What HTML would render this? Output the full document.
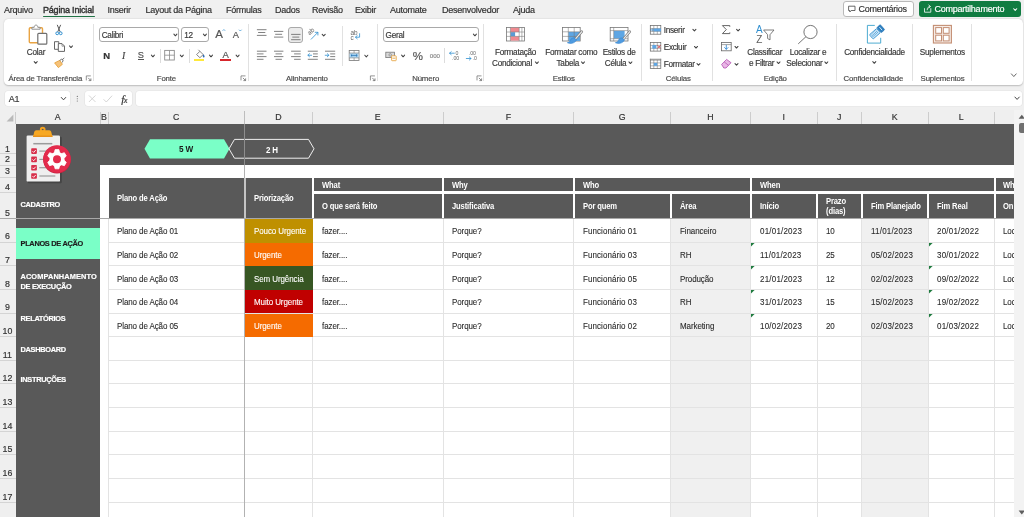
<!DOCTYPE html>
<html>
<head>
<meta charset="utf-8">
<title>Excel</title>
<style>
*{box-sizing:border-box;margin:0;padding:0}
html,body{width:1024px;height:517px;overflow:hidden}
body{background:#f0f0f0;font-family:"Liberation Sans",sans-serif;position:relative;color:#333}
.abs{position:absolute}
.t{-webkit-text-stroke:0.18px currentColor;position:absolute;white-space:nowrap;line-height:1;transform:translateY(calc(-50% + 0.8px))}
.c{transform:translate(-50%,calc(-50% + 0.8px))}
.tab{font-size:9px;color:#303030;letter-spacing:-0.24px}
.rl{font-size:8.2px;color:#3a3a3a;letter-spacing:-0.26px}
.gl{font-size:7.8px;color:#4a4a4a;letter-spacing:-0.14px}
.ch{font-size:8.8px;color:#333}
.th{font-size:8.2px;font-weight:bold;color:#fff;letter-spacing:-0.15px;-webkit-text-stroke:0;transform:translateY(calc(-50% + 0.8px)) scaleX(0.93);transform-origin:0 50%}
.c.th{transform:translate(-50%,calc(-50% + 0.8px)) scaleX(0.93);transform-origin:50% 50%}
.td{font-size:8.5px;color:#2b2b2b;letter-spacing:-0.1px;-webkit-text-stroke:0.1px currentColor;transform:translateY(calc(-50% + 0.8px)) scaleX(0.94);transform-origin:0 50%}
.nav{font-size:7.4px;font-weight:bold;color:#fff;letter-spacing:-0.3px}
.dt{letter-spacing:0.22px}
svg{position:absolute;overflow:visible}
#app{position:absolute;left:0;top:0;width:1024px;height:517px;overflow:hidden;will-change:transform;transform:translateZ(0)}

</style>
</head>
<body>
<div id="app">
<div class="t tab" style="left:4.00px;top:9.70px;">Arquivo</div>
<div class="t tab" style="left:43.00px;top:9.70px;-webkit-text-stroke:0.38px currentColor;letter-spacing:-0.2px">Página Inicial</div>
<div class="t tab" style="left:107.50px;top:9.70px;">Inserir</div>
<div class="t tab" style="left:145.50px;top:9.70px;">Layout da Página</div>
<div class="t tab" style="left:226.00px;top:9.70px;">Fórmulas</div>
<div class="t tab" style="left:275.00px;top:9.70px;">Dados</div>
<div class="t tab" style="left:312.00px;top:9.70px;">Revisão</div>
<div class="t tab" style="left:355.00px;top:9.70px;">Exibir</div>
<div class="t tab" style="left:390.00px;top:9.70px;">Automate</div>
<div class="t tab" style="left:442.00px;top:9.70px;">Desenvolvedor</div>
<div class="t tab" style="left:513.00px;top:9.70px;">Ajuda</div>
<div class="abs" style="left:43.00px;top:15.60px;width:52.00px;height:1.50px;background:#217346;border-radius:1px"></div>
<div class="abs" style="left:843.00px;top:1.20px;width:70.50px;height:15.60px;background:#fff;border:0.8px solid #b9b9b9;border-radius:3px"></div>
<div class="abs" style="left:919.00px;top:1.20px;width:102.00px;height:15.60px;background:#107c41;border-radius:3px"></div>
<div class="t tab" style="left:858.50px;top:9.40px;color:#333">Comentários</div>
<div class="t tab" style="left:934.50px;top:9.40px;color:#fff">Compartilhamento</div>
<div class="abs" style="left:4.20px;top:19.20px;width:1018.60px;height:65.40px;background:#fff;border-radius:4.5px;box-shadow:0 0.6px 1.6px rgba(0,0,0,.22)"></div>
<div class="abs" style="left:93.20px;top:24.00px;width:0.80px;height:56.50px;background:#e1e1e1"></div>
<div class="abs" style="left:247.90px;top:24.00px;width:0.80px;height:56.50px;background:#e1e1e1"></div>
<div class="abs" style="left:377.10px;top:24.00px;width:0.80px;height:56.50px;background:#e1e1e1"></div>
<div class="abs" style="left:483.20px;top:24.00px;width:0.80px;height:56.50px;background:#e1e1e1"></div>
<div class="abs" style="left:640.90px;top:24.00px;width:0.80px;height:56.50px;background:#e1e1e1"></div>
<div class="abs" style="left:712.10px;top:24.00px;width:0.80px;height:56.50px;background:#e1e1e1"></div>
<div class="abs" style="left:835.60px;top:24.00px;width:0.80px;height:56.50px;background:#e1e1e1"></div>
<div class="abs" style="left:911.60px;top:24.00px;width:0.80px;height:56.50px;background:#e1e1e1"></div>
<div class="abs" style="left:970.90px;top:24.00px;width:0.80px;height:56.50px;background:#e1e1e1"></div>
<div class="t c rl" style="left:36.00px;top:52.20px;">Colar</div>
<div class="t gl" style="left:8.40px;top:78.20px;">Área de Transferência</div>
<div class="abs" style="left:99.00px;top:27.10px;width:80.20px;height:15.40px;background:#fff;border:0.8px solid #a9a9a9;border-radius:3px"></div>
<div class="t rl" style="left:101.70px;top:34.60px;">Calibri</div>
<div class="abs" style="left:181.40px;top:27.10px;width:27.30px;height:15.40px;background:#fff;border:0.8px solid #a9a9a9;border-radius:3px"></div>
<div class="t rl" style="left:184.20px;top:34.60px;">12</div>
<div class="t c" style="left:219.00px;top:34.20px;font-size:11.5px;color:#555">A</div>
<div class="t c" style="left:235.80px;top:35.00px;font-size:9.3px;color:#555">A</div>
<div class="t c" style="left:106.70px;top:55.40px;font-size:9.5px;font-weight:bold;color:#333">N</div>
<div class="t c" style="left:123.70px;top:55.40px;font-size:9.8px;font-style:italic;font-family:'Liberation Serif',serif;color:#444">I</div>
<div class="t c" style="left:140.90px;top:55.00px;font-size:9.2px;color:#555">S</div>
<div class="abs" style="left:138.20px;top:59.40px;width:5.40px;height:0.70px;background:#555"></div>
<div class="abs" style="left:160.00px;top:48.50px;width:0.80px;height:14.00px;background:#dcdcdc"></div>
<div class="abs" style="left:189.00px;top:48.50px;width:0.80px;height:14.00px;background:#dcdcdc"></div>
<div class="abs" style="left:193.60px;top:58.80px;width:10.60px;height:2.40px;background:#ffe93b"></div>
<div class="t c" style="left:225.60px;top:54.00px;font-size:9.500px;color:#555">A</div>
<div class="abs" style="left:220.40px;top:58.80px;width:10.40px;height:2.40px;background:#d7262c"></div>
<div class="t gl" style="left:156.80px;top:78.20px;">Fonte</div>
<div class="abs" style="left:288.20px;top:26.90px;width:15.20px;height:15.70px;background:#ebebeb;border:0.8px solid #a9a9a9;border-radius:3px"></div>
<div class="abs" style="left:342.00px;top:26.20px;width:0.80px;height:40.30px;background:#e1e1e1"></div>
<div class="t gl" style="left:286.00px;top:78.20px;">Alinhamento</div>
<div class="abs" style="left:383.20px;top:27.10px;width:95.50px;height:15.40px;background:#fff;border:0.8px solid #a9a9a9;border-radius:3px"></div>
<div class="t rl" style="left:385.60px;top:34.60px;">Geral</div>
<div class="t c" style="left:417.90px;top:56.00px;font-size:11.500px;color:#555">%</div>
<div class="t c" style="left:434.90px;top:54.70px;font-size:6.200px;color:#8a8a8a">000</div>
<div class="abs" style="left:444.10px;top:47.80px;width:0.80px;height:15.60px;background:#dcdcdc"></div>
<div class="t gl" style="left:412.20px;top:78.20px;">Número</div>
<div class="t c rl" style="left:515.60px;top:52.10px;">Formatação</div>
<div class="t c rl" style="left:512.00px;top:62.50px;">Condicional</div>
<div class="t c rl" style="left:571.30px;top:52.10px;">Formatar como</div>
<div class="t c rl" style="left:567.80px;top:62.50px;">Tabela</div>
<div class="t c rl" style="left:619.10px;top:52.10px;">Estilos de</div>
<div class="t c rl" style="left:615.60px;top:62.50px;">Célula</div>
<div class="t gl" style="left:552.70px;top:78.20px;">Estilos</div>
<div class="t rl" style="left:663.70px;top:30.10px;">Inserir</div>
<div class="t rl" style="left:663.70px;top:47.30px;">Excluir</div>
<div class="t rl" style="left:663.70px;top:64.30px;">Formatar</div>
<div class="t gl" style="left:665.70px;top:78.20px;">Células</div>
<div class="t c rl" style="left:764.70px;top:52.10px;">Classificar</div>
<div class="t c rl" style="left:761.60px;top:62.50px;">e Filtrar</div>
<div class="t c rl" style="left:808.00px;top:52.10px;">Localizar e</div>
<div class="t c rl" style="left:804.40px;top:62.50px;">Selecionar</div>
<div class="t gl" style="left:763.80px;top:78.20px;">Edição</div>
<div class="t c rl" style="left:874.50px;top:52.10px;">Confidencialidade</div>
<div class="t gl" style="left:843.60px;top:78.20px;">Confidencialidade</div>
<div class="t c rl" style="left:942.30px;top:52.10px;">Suplementos</div>
<div class="t gl" style="left:920.60px;top:78.20px;">Suplementos</div>
<div class="abs" style="left:4.90px;top:90.80px;width:65.00px;height:15.20px;background:#fff;border-radius:3px;box-shadow:0 0 0 0.6px #e3e3e3"></div>
<div class="t rl" style="left:8.80px;top:98.90px;font-size:9px;color:#3a3a3a">A1</div>
<div class="abs" style="left:84.60px;top:90.80px;width:47.60px;height:15.20px;background:#fff;border-radius:3px;box-shadow:0 0 0 0.6px #e3e3e3"></div>
<div class="t c" style="left:124.30px;top:98.50px;font-family:'Liberation Serif',serif;font-size:11px;color:#333"><i>f</i><span style="font-size:8.300px;margin-left:-0.6px"><i>x</i></span></div>
<div class="abs" style="left:135.70px;top:90.80px;width:886.70px;height:15.20px;background:#fff;border-radius:3px;box-shadow:0 0 0 0.6px #e3e3e3"></div>
<svg style="left:0;top:0" width="1024" height="110" viewBox="0 0 1024 110"><path d="M848.6 6.2h6.4v4.3h-3.8l-1.4 1.5v-1.5h-1.2z" fill="none" stroke="#444" stroke-width="0.8" stroke-linejoin="round"/><path d="M924.5 8.6v3.6h6.3v-3.6M927.2 9.8c0-2 .9-3.2 2.9-3.3M928.8 4.9l1.5 1.6-1.5 1.6" fill="none" stroke="#fff" stroke-width="0.8" stroke-linecap="round" stroke-linejoin="round"/><path d="M1013.70 8.75L1015.20 10.37L1016.70 8.75" fill="none" stroke="#fff" stroke-width="1.05" stroke-linecap="round" stroke-linejoin="round"/><rect x="29.3" y="27.8" width="13.2" height="15" rx="1" fill="#fff" stroke="#e9a443" stroke-width="1.4"/><path d="M31.9 29.200v-1.900h2.300c0-1.400.7-2.200 1.800-2.200s1.800.8 1.800 2.200h2.300v1.900z" fill="#fff" stroke="#858585" stroke-width="0.9" stroke-linejoin="round"/><rect x="37.8" y="33.4" width="9" height="10.8" rx="0.9" fill="#fff" stroke="#6f6f6f" stroke-width="1.2"/><path d="M34.20 61.65L35.70 63.27L37.20 61.65" fill="none" stroke="#444" stroke-width="1.05" stroke-linecap="round" stroke-linejoin="round"/><path d="M57.4 25.2l2.600 6.300M60.500 25.200l-2.600 6.300" fill="none" stroke="#5a5a5a" stroke-width="1" stroke-linecap="round"/><circle cx="57.2" cy="33.3" r="1.4" fill="none" stroke="#2f8fd0" stroke-width="1"/><circle cx="60.700" cy="33.300" r="1.4" fill="none" stroke="#2f8fd0" stroke-width="1"/><path d="M54.500 41.700h4.300v7.600h-4.300z" fill="#fff" stroke="#5e5e5e" stroke-width="0.95"/><path d="M58.300 43.600h3.700l2.500 2.500v5.300h-6.200z" fill="#fff" stroke="#5e5e5e" stroke-width="0.95" stroke-linejoin="round"/><path d="M62 43.700v2.500h2.400" fill="none" stroke="#666" stroke-width="0.6"/><path d="M69.50 45.95L71.00 47.56L72.50 45.95" fill="none" stroke="#444" stroke-width="1.05" stroke-linecap="round" stroke-linejoin="round"/><path d="M54.600 62.900l5.100-2.500 2.700 3.900-4 3.300z" fill="#f6c27a" stroke="#e39a2d" stroke-width="0.8" stroke-linejoin="round"/><path d="M60 60.600l1.300-1.600 1.900 1.400-.9 1.800M62.300 59.600l1.700-1.400" fill="none" stroke="#666" stroke-width="0.9" stroke-linecap="round"/><path d="M86.3 80.4V75.9H90.8" fill="none" stroke="#666" stroke-width="0.7"/><path d="M88.19999999999999 77.9L90.8 80.5M90.89999999999999 78.4V80.60000000000001H88.69999999999999" fill="none" stroke="#666" stroke-width="0.75"/><path d="M173.90 34.15L175.40 35.77L176.90 34.15" fill="none" stroke="#444" stroke-width="1.05" stroke-linecap="round" stroke-linejoin="round"/><path d="M203.40 34.15L204.90 35.77L206.40 34.15" fill="none" stroke="#444" stroke-width="1.05" stroke-linecap="round" stroke-linejoin="round"/><path d="M222.600 30.800l1.300-1.300 1.300 1.300" fill="none" stroke="#2f8fd0" stroke-width="0.7"/><path d="M239 29.700l1.300 1.300 1.300-1.300" fill="none" stroke="#2f8fd0" stroke-width="0.7"/><path d="M151.40 55.15L152.90 56.77L154.40 55.15" fill="none" stroke="#444" stroke-width="1.05" stroke-linecap="round" stroke-linejoin="round"/><rect x="164.700" y="50.400" width="9.600" height="9.600" fill="none" stroke="#8c8c8c" stroke-width="0.9"/><path d="M169.500 50.400v9.600M164.700 55.200h9.600" stroke="#8c8c8c" stroke-width="0.8"/><path d="M180.30 55.15L181.80 56.77L183.30 55.15" fill="none" stroke="#444" stroke-width="1.05" stroke-linecap="round" stroke-linejoin="round"/><path d="M196.600 54.600l3.300-3.300 3.300 3.300-3.300 3.100z" fill="#fff" stroke="#666" stroke-width="0.8" stroke-linejoin="round"/><path d="M199.900 51.300l-1.500-1.500" stroke="#666" stroke-width="0.8"/><path d="M203.400 54.300c.9 1 1.200 1.700 1.200 2.300a.9.900 0 0 1-1.800 0c0-.6.200-1.300.6-2.300z" fill="#2f6fb5"/><path d="M209.50 55.15L211.00 56.77L212.50 55.15" fill="none" stroke="#444" stroke-width="1.05" stroke-linecap="round" stroke-linejoin="round"/><path d="M236.10 55.15L237.60 56.77L239.10 55.15" fill="none" stroke="#444" stroke-width="1.05" stroke-linecap="round" stroke-linejoin="round"/><path d="M241.0 80.4V75.9H245.5" fill="none" stroke="#666" stroke-width="0.7"/><path d="M242.9 77.9L245.5 80.5M245.60000000000002 78.4V80.60000000000001H243.4" fill="none" stroke="#666" stroke-width="0.75"/><path d="M256.90 29.70H266.50" stroke="#6c6c6c" stroke-width="0.85"/><path d="M258.10 32.50H265.30" stroke="#6c6c6c" stroke-width="0.85"/><path d="M256.90 35.40H266.50" stroke="#6c6c6c" stroke-width="0.85"/><path d="M274.00 31.40H283.30" stroke="#6c6c6c" stroke-width="0.85"/><path d="M275.20 34.30H282.10" stroke="#6c6c6c" stroke-width="0.85"/><path d="M274.00 37.10H283.30" stroke="#6c6c6c" stroke-width="0.85"/><path d="M291.10 34.40H300.50" stroke="#6c6c6c" stroke-width="0.85"/><path d="M292.30 37.10H299.30" stroke="#6c6c6c" stroke-width="0.85"/><path d="M291.10 39.70H300.50" stroke="#6c6c6c" stroke-width="0.85"/><text x="0" y="0" transform="translate(309.500 35.500) rotate(-42)" font-family="Liberation Sans" font-size="6.600" fill="#666">ab</text><path d="M311.200 39.200l6.600-6.800M315.200 32.300h2.700v2.700" fill="none" stroke="#2f8fd0" stroke-width="0.8" stroke-linecap="round"/><path d="M322.20 34.35L323.70 35.97L325.20 34.35" fill="none" stroke="#444" stroke-width="1.05" stroke-linecap="round" stroke-linejoin="round"/><text x="350.500" y="34.500" font-family="Liberation Sans" font-size="6.400" fill="#666">ab</text><text x="350.500" y="39.700" font-family="Liberation Sans" font-size="6.400" fill="#666">c</text><path d="M359.600 33.700v3.500h-4M357.200 35.600l-1.700 1.600 1.700 1.600" fill="none" stroke="#2f8fd0" stroke-width="0.8" stroke-linecap="round" stroke-linejoin="round"/><path d="M256.90 51.20H266.50" stroke="#6c6c6c" stroke-width="0.85"/><path d="M256.90 53.90H263.50" stroke="#6c6c6c" stroke-width="0.85"/><path d="M256.90 56.60H266.50" stroke="#6c6c6c" stroke-width="0.85"/><path d="M256.90 59.30H263.50" stroke="#6c6c6c" stroke-width="0.85"/><path d="M274.00 51.20H283.40" stroke="#6c6c6c" stroke-width="0.85"/><path d="M275.50 53.90H281.90" stroke="#6c6c6c" stroke-width="0.85"/><path d="M274.00 56.60H283.40" stroke="#6c6c6c" stroke-width="0.85"/><path d="M275.50 59.30H281.90" stroke="#6c6c6c" stroke-width="0.85"/><path d="M291.10 51.20H300.70" stroke="#6c6c6c" stroke-width="0.85"/><path d="M294.10 53.90H300.70" stroke="#6c6c6c" stroke-width="0.85"/><path d="M291.10 56.60H300.70" stroke="#6c6c6c" stroke-width="0.85"/><path d="M294.10 59.30H300.70" stroke="#6c6c6c" stroke-width="0.85"/><path d="M307.80 51.20H317.80" stroke="#6c6c6c" stroke-width="0.85"/><path d="M313.00 53.90H317.80" stroke="#6c6c6c" stroke-width="0.85"/><path d="M313.00 56.60H317.80" stroke="#6c6c6c" stroke-width="0.85"/><path d="M307.80 59.30H317.80" stroke="#6c6c6c" stroke-width="0.85"/><path d="M311.600 55.250h-3.600M309.500 53.700l-1.600 1.550 1.600 1.550" fill="none" stroke="#2f8fd0" stroke-width="0.8" stroke-linecap="round" stroke-linejoin="round"/><path d="M325.00 51.20H335.20" stroke="#6c6c6c" stroke-width="0.85"/><path d="M330.20 53.90H335.20" stroke="#6c6c6c" stroke-width="0.85"/><path d="M330.20 56.60H335.20" stroke="#6c6c6c" stroke-width="0.85"/><path d="M325.00 59.30H335.20" stroke="#6c6c6c" stroke-width="0.85"/><path d="M325.200 55.250h3.600M327.300 53.700l1.600 1.550-1.600 1.550" fill="none" stroke="#2f8fd0" stroke-width="0.8" stroke-linecap="round" stroke-linejoin="round"/><rect x="349.200" y="50.400" width="9.800" height="10" fill="#fff" stroke="#777" stroke-width="0.8"/><rect x="349.600" y="53.200" width="9" height="4.500" fill="#a9d4f2"/><path d="M349.200 53h9.800M349.200 57.900h9.800M354.100 50.400v2.600M354.100 57.900v2.500" stroke="#777" stroke-width="0.6"/><path d="M351 55.450h6.200M352.200 54.300l-1.200 1.150 1.200 1.150M356 54.300l1.200 1.150-1.200 1.150" fill="none" stroke="#1f6fb0" stroke-width="0.7"/><path d="M364.80 55.25L366.30 56.87L367.80 55.25" fill="none" stroke="#444" stroke-width="1.05" stroke-linecap="round" stroke-linejoin="round"/><path d="M370.4 80.4V75.9H374.9" fill="none" stroke="#666" stroke-width="0.7"/><path d="M372.3 77.9L374.9 80.5M375.0 78.4V80.60000000000001H372.8" fill="none" stroke="#666" stroke-width="0.75"/><path d="M473.40 34.15L474.90 35.77L476.40 34.15" fill="none" stroke="#444" stroke-width="1.05" stroke-linecap="round" stroke-linejoin="round"/><rect x="385.800" y="52.200" width="8.800" height="5.400" fill="#d9d9d9" stroke="#777" stroke-width="0.8"/><circle cx="390.200" cy="54.900" r="1.300" fill="none" stroke="#777" stroke-width="0.6"/><rect x="391.600" y="55.800" width="4.600" height="4.900" rx="0.6" fill="#fff" stroke="#e39a2d" stroke-width="0.8"/><path d="M392.400 58.200h3" stroke="#e39a2d" stroke-width="0.8"/><path d="M401.60 55.15L403.10 56.77L404.60 55.15" fill="none" stroke="#444" stroke-width="1.05" stroke-linecap="round" stroke-linejoin="round"/><text font-family="Liberation Sans" font-size="5.200" fill="#666"><tspan x="455.500" y="55.200">0</tspan><tspan x="452" y="60.200">.00</tspan></text><path d="M454.300 53.200h-4.700M451.200 51.700l-1.600 1.500 1.600 1.500" fill="none" stroke="#2f8fd0" stroke-width="0.8" stroke-linecap="round" stroke-linejoin="round"/><text font-family="Liberation Sans" font-size="5.200" fill="#666"><tspan x="468.700" y="55.200">.00</tspan><tspan x="472.500" y="60.200">.0</tspan></text><path d="M466.300 58.500h4.700M469.400 57l1.600 1.500-1.600 1.500" fill="none" stroke="#2f8fd0" stroke-width="0.8" stroke-linecap="round" stroke-linejoin="round"/><path d="M477.0 80.4V75.9H481.5" fill="none" stroke="#666" stroke-width="0.7"/><path d="M478.90000000000003 77.9L481.5 80.5M481.6 78.4V80.60000000000001H479.40000000000003" fill="none" stroke="#666" stroke-width="0.75"/><rect x="506.400" y="27.400" width="18.200" height="13.600" fill="#fff" stroke="#777" stroke-width="0.8"/><rect x="510.500" y="27.800" width="8.600" height="4.200" fill="#f08a90"/><rect x="510.500" y="36.400" width="8.600" height="4.200" fill="#f08a90"/><rect x="510.500" y="32.200" width="4.600" height="4" fill="#5b9bd5"/><path d="M506.400 32h18.200M506.400 36.400h18.200M510.400 27.400v13.600M519.200 27.400v13.600M521.900 27.400v13.600" stroke="#777" stroke-width="0.55"/><path d="M535.40 61.95L536.90 63.56L538.40 61.95" fill="none" stroke="#444" stroke-width="1.05" stroke-linecap="round" stroke-linejoin="round"/><rect x="562.400" y="27.400" width="17.800" height="13.600" fill="#fff" stroke="#777" stroke-width="0.8"/><rect x="568.400" y="31.900" width="11.600" height="9" fill="#5ea6e4"/><path d="M562.400 31.800h17.800M562.400 36.400h17.800M568.300 27.400v13.600M574.200 27.400v13.600" stroke="#777" stroke-width="0.55"/><path d="M581.8 31.600L574.6 39.800" stroke="#7a7a7a" stroke-width="2.500" stroke-linecap="round"/><path d="M581.8 31.600L574.6 39.800" stroke="#ececec" stroke-width="1.200" stroke-linecap="round"/><path d="M574.9 38.300c-2.100-.9-4 .2-4.500 2-.4 1.400-1.500 2.100-3.100 2.400 2.900 1.600 7.600.7 9.200-2.700z" fill="#4f9be0" stroke="#2b7fcc" stroke-width="0.500"/><path d="M581.50 61.95L583.00 63.56L584.50 61.95" fill="none" stroke="#444" stroke-width="1.05" stroke-linecap="round" stroke-linejoin="round"/><rect x="610.200" y="27.400" width="17.800" height="13.600" fill="#fff" stroke="#777" stroke-width="0.8"/><rect x="613.800" y="30.800" width="10.800" height="7.800" fill="#5ea6e4"/><path d="M610.200 30.600h17.800M613.700 27.400v13.600M610.200 38.700h17.800" stroke="#777" stroke-width="0.55"/><path d="M629.8 31.600L622.6 39.800" stroke="#7a7a7a" stroke-width="2.500" stroke-linecap="round"/><path d="M629.8 31.600L622.6 39.800" stroke="#ececec" stroke-width="1.200" stroke-linecap="round"/><path d="M622.9 38.300c-2.100-.9-4 .2-4.500 2-.4 1.400-1.500 2.100-3.100 2.400 2.900 1.600 7.600.7 9.200-2.700z" fill="#4f9be0" stroke="#2b7fcc" stroke-width="0.500"/><path d="M628.90 61.95L630.40 63.56L631.90 61.95" fill="none" stroke="#444" stroke-width="1.05" stroke-linecap="round" stroke-linejoin="round"/><rect x="650.300" y="25.6" width="10.500" height="8.600" fill="#fff" stroke="#6a6a6a" stroke-width="0.75"/><path d="M650.300 28.5h10.500M650.300 31.400000000000002h10.500M653.800 25.6v8.600M657.300 25.6v8.600" stroke="#6a6a6a" stroke-width="0.5"/><rect x="653.800" y="28.5" width="7.200" height="2.900" fill="#5ea6e4"/><path d="M650 29.950000000000003h3.400M652.200 28.8l1.300 1.150-1.300 1.150" fill="none" stroke="#1f6fb0" stroke-width="0.7"/><path d="M692.90 29.35L694.40 30.96L695.90 29.35" fill="none" stroke="#444" stroke-width="1.05" stroke-linecap="round" stroke-linejoin="round"/><rect x="650.300" y="42.5" width="10.500" height="8.600" fill="#fff" stroke="#6a6a6a" stroke-width="0.75"/><path d="M650.300 45.4h10.500M650.300 48.3h10.500M653.800 42.5v8.600M657.300 42.5v8.600" stroke="#6a6a6a" stroke-width="0.5"/><rect x="652.300" y="45.1" width="4" height="3.500" fill="#5ea6e4"/><path d="M657.600 45.3l3 3M660.600 45.3l-3 3" stroke="#d7383d" stroke-width="0.8"/><path d="M694.50 46.45L696.00 48.06L697.50 46.45" fill="none" stroke="#444" stroke-width="1.05" stroke-linecap="round" stroke-linejoin="round"/><rect x="650.300" y="60" width="10.500" height="8.600" fill="#fff" stroke="#6a6a6a" stroke-width="0.75"/><path d="M650.300 62.9h10.500M650.300 65.8h10.500M653.800 60v8.600M657.300 60v8.600" stroke="#6a6a6a" stroke-width="0.5"/><rect x="653.800" y="62.9" width="3.500" height="2.900" fill="#5ea6e4"/><path d="M650.300 58.7v1.300M660.800 58.7v1.300M650.300 59.2h10.500" stroke="#6a6a6a" stroke-width="0.6"/><path d="M697.00 63.55L698.50 65.17L700.00 63.55" fill="none" stroke="#444" stroke-width="1.05" stroke-linecap="round" stroke-linejoin="round"/><path d="M729.800 26.800v-1.200h-7.400l3.900 4-3.900 4h7.400v-1.200" fill="none" stroke="#555" stroke-width="0.9" stroke-linejoin="miter"/><path d="M736.60 29.35L738.10 30.96L739.60 29.35" fill="none" stroke="#444" stroke-width="1.05" stroke-linecap="round" stroke-linejoin="round"/><rect x="721.400" y="42.500" width="9.800" height="8.300" fill="#fff" stroke="#666" stroke-width="0.8"/><path d="M721.400 44.600h9.800" stroke="#666" stroke-width="0.6"/><path d="M726.300 45.300v3.900M724.600 47.600l1.700 1.700 1.700-1.700" fill="none" stroke="#1f7fd0" stroke-width="0.8" stroke-linecap="round" stroke-linejoin="round"/><path d="M735.00 46.45L736.50 48.06L738.00 46.45" fill="none" stroke="#444" stroke-width="1.05" stroke-linecap="round" stroke-linejoin="round"/><path d="M721.600 64.400l5-5 4.400 3.300-5 5.300h-2.200z" fill="#e9b6e6" stroke="#b24fb0" stroke-width="0.8" stroke-linejoin="round"/><path d="M724.200 61.900l4.300 3.400" stroke="#b24fb0" stroke-width="0.7"/><path d="M735.00 63.55L736.50 65.17L738.00 63.55" fill="none" stroke="#444" stroke-width="1.05" stroke-linecap="round" stroke-linejoin="round"/><text x="755.900" y="33" font-family="Liberation Sans" font-size="10" fill="#2f8fd0">A</text><text x="756.200" y="43" font-family="Liberation Sans" font-size="10" fill="#5e5e5e">Z</text><path d="M763.600 30h10.400l-4 4.700v5.200l-2.400-1.400v-3.800z" fill="#fff" stroke="#666" stroke-width="0.85" stroke-linejoin="round"/><path d="M777.00 61.95L778.50 63.56L780.00 61.95" fill="none" stroke="#444" stroke-width="1.05" stroke-linecap="round" stroke-linejoin="round"/><circle cx="810.500" cy="32" r="6.600" fill="#fff" stroke="#666" stroke-width="0.9"/><path d="M805.700 36.900l-7.200 6.700" stroke="#666" stroke-width="0.9" stroke-linecap="round"/><path d="M824.80 61.95L826.30 63.56L827.80 61.95" fill="none" stroke="#444" stroke-width="1.05" stroke-linecap="round" stroke-linejoin="round"/><path d="M874.800 25.400H867.400V43.100H880.700V37.800" fill="none" stroke="#3aa3cc" stroke-width="0.9"/><g transform="translate(877.600 31.400) rotate(-41)"><rect x="-8.400" y="-2.800" width="9.600" height="5.600" rx="0.700" fill="#cfe6f7" stroke="#2f8fd0" stroke-width="0.8"/><path d="M-6.800 -1.700v3.400M-5.300 -1.700v3.400M-3.800 -1.700v3.400M-2.300 -1.700v3.400M-.8 -1.700v3.400" stroke="#2f8fd0" stroke-width="0.600"/><rect x="1.900" y="-3.400" width="4.600" height="6.800" rx="0.800" fill="#2d7fc0" stroke="#2371b0" stroke-width="0.600"/><path d="M4.200 -2v4" stroke="#d7eaf8" stroke-width="0.900"/></g><path d="M872.80 61.65L874.30 63.27L875.80 61.65" fill="none" stroke="#444" stroke-width="1.05" stroke-linecap="round" stroke-linejoin="round"/><rect x="933.400" y="25.400" width="18" height="17.600" fill="#f6ece6" stroke="#c48e73" stroke-width="1.1"/><rect x="935.700" y="27.600" width="5.800" height="5.700" fill="#fff" stroke="#c48e73" stroke-width="1"/><rect x="943.300" y="27.600" width="5.800" height="5.700" fill="#fff" stroke="#c48e73" stroke-width="1"/><rect x="935.700" y="35.200" width="5.800" height="5.700" fill="#fff" stroke="#c48e73" stroke-width="1"/><rect x="943.300" y="35.200" width="5.800" height="5.700" fill="#fff" stroke="#c48e73" stroke-width="1"/><path d="M1011.40 73.90L1013.80 76.56L1016.20 73.90" fill="none" stroke="#555" stroke-width="0.9" stroke-linecap="round" stroke-linejoin="round"/><path d="M61.30 97.45L63.50 99.83L65.70 97.45" fill="none" stroke="#444" stroke-width="1.0" stroke-linecap="round" stroke-linejoin="round"/><circle cx="77.300" cy="96.4" r="0.55" fill="#666"/><circle cx="77.300" cy="98.7" r="0.55" fill="#666"/><circle cx="77.300" cy="101" r="0.55" fill="#666"/><path d="M89 95.500l6.400 6.400M95.400 95.500l-6.400 6.400" stroke="#cfcfcf" stroke-width="0.9"/><path d="M103.600 99.300l2.700 2.700 5.800-6.300" fill="none" stroke="#cfcfcf" stroke-width="0.9"/><path d="M1014.90 97.05L1017.10 99.42L1019.30 97.05" fill="none" stroke="#444" stroke-width="1.0" stroke-linecap="round" stroke-linejoin="round"/></svg>
<div class="abs" style="left:0.00px;top:110.00px;width:1014.30px;height:13.50px;background:#efefef"></div>
<div class="abs" style="left:0.00px;top:123.50px;width:15.50px;height:393.50px;background:#efefef"></div>
<svg style="left:0;top:0" width="20" height="125"><path d="M13.400 114.500V121.500H6.600Z" fill="#b9b9b9"/></svg>
<div class="t c ch" style="left:57.75px;top:117.20px;">A</div>
<div class="t c ch" style="left:104.00px;top:117.20px;">B</div>
<div class="t c ch" style="left:176.25px;top:117.20px;">C</div>
<div class="t c ch" style="left:278.50px;top:117.20px;">D</div>
<div class="t c ch" style="left:377.75px;top:117.20px;">E</div>
<div class="t c ch" style="left:508.38px;top:117.20px;">F</div>
<div class="t c ch" style="left:622.12px;top:117.20px;">G</div>
<div class="t c ch" style="left:710.50px;top:117.20px;">H</div>
<div class="t c ch" style="left:783.75px;top:117.20px;">I</div>
<div class="t c ch" style="left:839.25px;top:117.20px;">J</div>
<div class="t c ch" style="left:894.75px;top:117.20px;">K</div>
<div class="t c ch" style="left:961.25px;top:117.20px;">L</div>
<div class="abs" style="left:99.50px;top:112.00px;width:1.00px;height:11.50px;background:#cdcdcd"></div>
<div class="abs" style="left:107.50px;top:112.00px;width:1.00px;height:11.50px;background:#cdcdcd"></div>
<div class="abs" style="left:244.00px;top:112.00px;width:1.00px;height:11.50px;background:#cdcdcd"></div>
<div class="abs" style="left:312.00px;top:112.00px;width:1.00px;height:11.50px;background:#cdcdcd"></div>
<div class="abs" style="left:442.50px;top:112.00px;width:1.00px;height:11.50px;background:#cdcdcd"></div>
<div class="abs" style="left:573.25px;top:112.00px;width:1.00px;height:11.50px;background:#cdcdcd"></div>
<div class="abs" style="left:670.00px;top:112.00px;width:1.00px;height:11.50px;background:#cdcdcd"></div>
<div class="abs" style="left:750.00px;top:112.00px;width:1.00px;height:11.50px;background:#cdcdcd"></div>
<div class="abs" style="left:816.50px;top:112.00px;width:1.00px;height:11.50px;background:#cdcdcd"></div>
<div class="abs" style="left:861.00px;top:112.00px;width:1.00px;height:11.50px;background:#cdcdcd"></div>
<div class="abs" style="left:927.50px;top:112.00px;width:1.00px;height:11.50px;background:#cdcdcd"></div>
<div class="abs" style="left:994.00px;top:112.00px;width:1.00px;height:11.50px;background:#cdcdcd"></div>
<div class="abs" style="left:1013.80px;top:112.00px;width:1.00px;height:11.50px;background:#cdcdcd"></div>
<div class="abs" style="left:15.00px;top:112.00px;width:1.00px;height:11.50px;background:#cdcdcd"></div>
<div class="abs" style="left:0.00px;top:153.20px;width:15.50px;height:1.00px;background:#d4d4d4"></div>
<div class="t c ch" style="left:7.45px;top:149.20px;">1</div>
<div class="abs" style="left:0.00px;top:164.60px;width:15.50px;height:1.00px;background:#d4d4d4"></div>
<div class="t c ch" style="left:7.45px;top:158.70px;">2</div>
<div class="abs" style="left:0.00px;top:176.60px;width:15.50px;height:1.00px;background:#d4d4d4"></div>
<div class="t c ch" style="left:7.45px;top:170.80px;">3</div>
<div class="abs" style="left:0.00px;top:191.70px;width:15.50px;height:1.00px;background:#d4d4d4"></div>
<div class="t c ch" style="left:7.45px;top:186.90px;">4</div>
<div class="abs" style="left:0.00px;top:217.90px;width:15.50px;height:1.00px;background:#d4d4d4"></div>
<div class="t c ch" style="left:7.45px;top:212.80px;">5</div>
<div class="abs" style="left:0.00px;top:241.55px;width:15.50px;height:1.00px;background:#d4d4d4"></div>
<div class="t c ch" style="left:7.45px;top:236.45px;">6</div>
<div class="abs" style="left:0.00px;top:265.20px;width:15.50px;height:1.00px;background:#d4d4d4"></div>
<div class="t c ch" style="left:7.45px;top:260.10px;">7</div>
<div class="abs" style="left:0.00px;top:288.85px;width:15.50px;height:1.00px;background:#d4d4d4"></div>
<div class="t c ch" style="left:7.45px;top:283.75px;">8</div>
<div class="abs" style="left:0.00px;top:312.50px;width:15.50px;height:1.00px;background:#d4d4d4"></div>
<div class="t c ch" style="left:7.45px;top:307.40px;">9</div>
<div class="abs" style="left:0.00px;top:336.15px;width:15.50px;height:1.00px;background:#d4d4d4"></div>
<div class="t c ch" style="left:7.45px;top:331.05px;">10</div>
<div class="abs" style="left:0.00px;top:359.80px;width:15.50px;height:1.00px;background:#d4d4d4"></div>
<div class="t c ch" style="left:7.45px;top:354.70px;">11</div>
<div class="abs" style="left:0.00px;top:383.45px;width:15.50px;height:1.00px;background:#d4d4d4"></div>
<div class="t c ch" style="left:7.45px;top:378.35px;">12</div>
<div class="abs" style="left:0.00px;top:407.10px;width:15.50px;height:1.00px;background:#d4d4d4"></div>
<div class="t c ch" style="left:7.45px;top:402.00px;">13</div>
<div class="abs" style="left:0.00px;top:430.75px;width:15.50px;height:1.00px;background:#d4d4d4"></div>
<div class="t c ch" style="left:7.45px;top:425.65px;">14</div>
<div class="abs" style="left:0.00px;top:454.40px;width:15.50px;height:1.00px;background:#d4d4d4"></div>
<div class="t c ch" style="left:7.45px;top:449.30px;">15</div>
<div class="abs" style="left:0.00px;top:478.05px;width:15.50px;height:1.00px;background:#d4d4d4"></div>
<div class="t c ch" style="left:7.45px;top:472.95px;">16</div>
<div class="abs" style="left:0.00px;top:501.70px;width:15.50px;height:1.00px;background:#d4d4d4"></div>
<div class="t c ch" style="left:7.45px;top:496.60px;">17</div>
<div class="abs" style="left:0.00px;top:525.35px;width:15.50px;height:1.00px;background:#d4d4d4"></div>
<div class="t c ch" style="left:7.45px;top:520.25px;">18</div>
<div class="abs" style="left:15.50px;top:123.50px;width:998.80px;height:393.50px;background:#fff"></div>
<div class="abs" style="left:670.50px;top:218.40px;width:80.00px;height:298.60px;background:#f0f0f0"></div>
<div class="abs" style="left:861.50px;top:218.40px;width:66.50px;height:298.60px;background:#f0f0f0"></div>
<div class="abs" style="left:108.00px;top:217.90px;width:906.30px;height:1.00px;background:#e3e3e3"></div>
<div class="abs" style="left:108.00px;top:241.55px;width:906.30px;height:1.00px;background:#e3e3e3"></div>
<div class="abs" style="left:108.00px;top:265.20px;width:906.30px;height:1.00px;background:#e3e3e3"></div>
<div class="abs" style="left:108.00px;top:288.85px;width:906.30px;height:1.00px;background:#e3e3e3"></div>
<div class="abs" style="left:108.00px;top:312.50px;width:906.30px;height:1.00px;background:#e3e3e3"></div>
<div class="abs" style="left:108.00px;top:336.15px;width:906.30px;height:1.00px;background:#e3e3e3"></div>
<div class="abs" style="left:108.00px;top:359.80px;width:906.30px;height:1.00px;background:#e3e3e3"></div>
<div class="abs" style="left:108.00px;top:383.45px;width:906.30px;height:1.00px;background:#e3e3e3"></div>
<div class="abs" style="left:108.00px;top:407.10px;width:906.30px;height:1.00px;background:#e3e3e3"></div>
<div class="abs" style="left:108.00px;top:430.75px;width:906.30px;height:1.00px;background:#e3e3e3"></div>
<div class="abs" style="left:108.00px;top:454.40px;width:906.30px;height:1.00px;background:#e3e3e3"></div>
<div class="abs" style="left:108.00px;top:478.05px;width:906.30px;height:1.00px;background:#e3e3e3"></div>
<div class="abs" style="left:108.00px;top:501.70px;width:906.30px;height:1.00px;background:#e3e3e3"></div>
<div class="abs" style="left:107.50px;top:218.40px;width:1.00px;height:298.60px;background:#e3e3e3"></div>
<div class="abs" style="left:244.00px;top:218.40px;width:1.00px;height:298.60px;background:#e3e3e3"></div>
<div class="abs" style="left:312.00px;top:218.40px;width:1.00px;height:298.60px;background:#e3e3e3"></div>
<div class="abs" style="left:442.50px;top:218.40px;width:1.00px;height:298.60px;background:#e3e3e3"></div>
<div class="abs" style="left:573.25px;top:218.40px;width:1.00px;height:298.60px;background:#e3e3e3"></div>
<div class="abs" style="left:670.00px;top:218.40px;width:1.00px;height:298.60px;background:#e3e3e3"></div>
<div class="abs" style="left:750.00px;top:218.40px;width:1.00px;height:298.60px;background:#e3e3e3"></div>
<div class="abs" style="left:816.50px;top:218.40px;width:1.00px;height:298.60px;background:#e3e3e3"></div>
<div class="abs" style="left:861.00px;top:218.40px;width:1.00px;height:298.60px;background:#e3e3e3"></div>
<div class="abs" style="left:927.50px;top:218.40px;width:1.00px;height:298.60px;background:#e3e3e3"></div>
<div class="abs" style="left:994.00px;top:218.40px;width:1.00px;height:298.60px;background:#e3e3e3"></div>
<div class="abs" style="left:15.50px;top:123.50px;width:998.80px;height:41.40px;background:#595959"></div>
<div class="abs" style="left:15.50px;top:123.50px;width:84.50px;height:393.50px;background:#595959"></div>
<div class="abs" style="left:108.60px;top:178.00px;width:135.00px;height:39.70px;background:#595959"></div>
<div class="t th" style="left:117.00px;top:197.85px;">Plano de Ação</div>
<div class="abs" style="left:245.60px;top:178.00px;width:66.00px;height:39.70px;background:#595959"></div>
<div class="t th" style="left:253.50px;top:197.85px;">Priorização</div>
<div class="abs" style="left:313.60px;top:178.00px;width:128.40px;height:13.40px;background:#595959"></div>
<div class="t th" style="left:321.50px;top:184.70px;">What</div>
<div class="abs" style="left:444.20px;top:178.00px;width:128.40px;height:13.40px;background:#595959"></div>
<div class="t th" style="left:452.00px;top:184.70px;">Why</div>
<div class="abs" style="left:575.00px;top:178.00px;width:174.60px;height:13.40px;background:#595959"></div>
<div class="t th" style="left:583.00px;top:184.70px;">Who</div>
<div class="abs" style="left:751.60px;top:178.00px;width:242.00px;height:13.40px;background:#595959"></div>
<div class="t th" style="left:760.00px;top:184.70px;">When</div>
<div class="abs" style="left:995.60px;top:178.00px;width:18.70px;height:13.40px;background:#595959"></div>
<div class="t th" style="left:1003.00px;top:184.70px;">Wh</div>
<div class="abs" style="left:313.60px;top:193.70px;width:128.40px;height:24.00px;background:#595959"></div>
<div class="t th" style="left:321.50px;top:205.70px;">O que será feito</div>
<div class="abs" style="left:444.20px;top:193.70px;width:128.40px;height:24.00px;background:#595959"></div>
<div class="t th" style="left:452.00px;top:205.70px;">Justificativa</div>
<div class="abs" style="left:575.00px;top:193.70px;width:94.60px;height:24.00px;background:#595959"></div>
<div class="t th" style="left:583.00px;top:205.70px;">Por quem</div>
<div class="abs" style="left:671.60px;top:193.70px;width:78.00px;height:24.00px;background:#595959"></div>
<div class="t th" style="left:679.50px;top:205.70px;">Área</div>
<div class="abs" style="left:751.60px;top:193.70px;width:64.40px;height:24.00px;background:#595959"></div>
<div class="t th" style="left:760.00px;top:205.70px;">Início</div>
<div class="abs" style="left:818.00px;top:193.70px;width:42.60px;height:24.00px;background:#595959"></div>
<div class="t th" style="left:826.00px;top:200.70px;">Prazo</div>
<div class="t th" style="left:826.00px;top:210.50px;">(dias)</div>
<div class="abs" style="left:862.60px;top:193.70px;width:64.40px;height:24.00px;background:#595959"></div>
<div class="t th" style="left:871.00px;top:205.70px;">Fim Planejado</div>
<div class="abs" style="left:929.00px;top:193.70px;width:64.60px;height:24.00px;background:#595959"></div>
<div class="t th" style="left:937.00px;top:205.70px;">Fim Real</div>
<div class="abs" style="left:995.60px;top:193.70px;width:18.70px;height:24.00px;background:#595959"></div>
<div class="t th" style="left:1003.00px;top:205.70px;">On</div>
<div class="abs" style="left:245.00px;top:218.90px;width:67.50px;height:23.65px;background:#bf9000"></div>
<div class="t td" style="left:117.00px;top:230.43px;">Plano de Ação 01</div>
<div class="t td" style="left:253.50px;top:230.43px;color:#fff">Pouco Urgente</div>
<div class="t td" style="left:321.50px;top:230.43px;">fazer....</div>
<div class="t td" style="left:452.00px;top:230.43px;">Porque?</div>
<div class="t td" style="left:583.00px;top:230.43px;letter-spacing:0.08px">Funcionário 01</div>
<div class="t td" style="left:679.50px;top:230.43px;">Financeiro</div>
<div class="t td dt" style="left:760.00px;top:230.43px;">01/01/2023</div>
<div class="t td" style="left:826.00px;top:230.43px;">10</div>
<div class="t td dt" style="left:871.00px;top:230.43px;">11/01/2023</div>
<div class="t td dt" style="left:937.00px;top:230.43px;">20/01/2022</div>
<div class="t td" style="left:1003.00px;top:230.43px;">Loc</div>
<div class="abs" style="left:245.00px;top:242.55px;width:67.50px;height:23.65px;background:#f56b00"></div>
<div class="t td" style="left:117.00px;top:254.07px;">Plano de Ação 02</div>
<div class="t td" style="left:253.50px;top:254.07px;color:#fff">Urgente</div>
<div class="t td" style="left:321.50px;top:254.07px;">fazer....</div>
<div class="t td" style="left:452.00px;top:254.07px;">Porque?</div>
<div class="t td" style="left:583.00px;top:254.07px;letter-spacing:0.08px">Funcionário 03</div>
<div class="t td" style="left:679.50px;top:254.07px;">RH</div>
<div class="t td dt" style="left:760.00px;top:254.07px;">11/01/2023</div>
<div class="t td" style="left:826.00px;top:254.07px;">25</div>
<div class="t td dt" style="left:871.00px;top:254.07px;">05/02/2023</div>
<div class="t td dt" style="left:937.00px;top:254.07px;">30/01/2022</div>
<div class="t td" style="left:1003.00px;top:254.07px;">Loc</div>
<svg style="left:751.0px;top:242.55px" width="4" height="4"><path d="M0 0H3.6L0 3.6Z" fill="#1e7a3e"/></svg>
<svg style="left:928.5px;top:242.55px" width="4" height="4"><path d="M0 0H3.6L0 3.6Z" fill="#1e7a3e"/></svg>
<div class="abs" style="left:245.00px;top:266.20px;width:67.50px;height:23.65px;background:#375623"></div>
<div class="t td" style="left:117.00px;top:277.72px;">Plano de Ação 03</div>
<div class="t td" style="left:253.50px;top:277.72px;color:#fff">Sem Urgência</div>
<div class="t td" style="left:321.50px;top:277.72px;">fazer....</div>
<div class="t td" style="left:452.00px;top:277.72px;">Porque?</div>
<div class="t td" style="left:583.00px;top:277.72px;letter-spacing:0.08px">Funcionário 05</div>
<div class="t td" style="left:679.50px;top:277.72px;">Produção</div>
<div class="t td dt" style="left:760.00px;top:277.72px;">21/01/2023</div>
<div class="t td" style="left:826.00px;top:277.72px;">12</div>
<div class="t td dt" style="left:871.00px;top:277.72px;">02/02/2023</div>
<div class="t td dt" style="left:937.00px;top:277.72px;">09/02/2022</div>
<div class="t td" style="left:1003.00px;top:277.72px;">Loc</div>
<svg style="left:751.0px;top:266.2px" width="4" height="4"><path d="M0 0H3.6L0 3.6Z" fill="#1e7a3e"/></svg>
<svg style="left:928.5px;top:266.2px" width="4" height="4"><path d="M0 0H3.6L0 3.6Z" fill="#1e7a3e"/></svg>
<div class="abs" style="left:245.00px;top:289.85px;width:67.50px;height:23.65px;background:#c00000"></div>
<div class="t td" style="left:117.00px;top:301.38px;">Plano de Ação 04</div>
<div class="t td" style="left:253.50px;top:301.38px;color:#fff">Muito Urgente</div>
<div class="t td" style="left:321.50px;top:301.38px;">fazer....</div>
<div class="t td" style="left:452.00px;top:301.38px;">Porque?</div>
<div class="t td" style="left:583.00px;top:301.38px;letter-spacing:0.08px">Funcionário 03</div>
<div class="t td" style="left:679.50px;top:301.38px;">RH</div>
<div class="t td dt" style="left:760.00px;top:301.38px;">31/01/2023</div>
<div class="t td" style="left:826.00px;top:301.38px;">15</div>
<div class="t td dt" style="left:871.00px;top:301.38px;">15/02/2023</div>
<div class="t td dt" style="left:937.00px;top:301.38px;">19/02/2022</div>
<div class="t td" style="left:1003.00px;top:301.38px;">Loc</div>
<svg style="left:751.0px;top:289.85px" width="4" height="4"><path d="M0 0H3.6L0 3.6Z" fill="#1e7a3e"/></svg>
<svg style="left:928.5px;top:289.85px" width="4" height="4"><path d="M0 0H3.6L0 3.6Z" fill="#1e7a3e"/></svg>
<div class="abs" style="left:245.00px;top:313.50px;width:67.50px;height:23.65px;background:#f56b00"></div>
<div class="t td" style="left:117.00px;top:325.02px;">Plano de Ação 05</div>
<div class="t td" style="left:253.50px;top:325.02px;color:#fff">Urgente</div>
<div class="t td" style="left:321.50px;top:325.02px;">fazer....</div>
<div class="t td" style="left:452.00px;top:325.02px;">Porque?</div>
<div class="t td" style="left:583.00px;top:325.02px;letter-spacing:0.08px">Funcionário 02</div>
<div class="t td" style="left:679.50px;top:325.02px;">Marketing</div>
<div class="t td dt" style="left:760.00px;top:325.02px;">10/02/2023</div>
<div class="t td" style="left:826.00px;top:325.02px;">20</div>
<div class="t td dt" style="left:871.00px;top:325.02px;">02/03/2023</div>
<div class="t td dt" style="left:937.00px;top:325.02px;">01/03/2022</div>
<div class="t td" style="left:1003.00px;top:325.02px;">Loc</div>
<svg style="left:751.0px;top:313.5px" width="4" height="4"><path d="M0 0H3.6L0 3.6Z" fill="#1e7a3e"/></svg>
<svg style="left:928.5px;top:313.5px" width="4" height="4"><path d="M0 0H3.6L0 3.6Z" fill="#1e7a3e"/></svg>
<svg style="left:0;top:0" width="1024" height="517"><path d="M144.5 148.8L150 139.2H224L229.5 148.8L224 158.4H150Z" fill="#7affc7"/><path d="M229 148.8L234.500 139.4H308.5L314 148.8L308.5 158.2H234.500Z" fill="none" stroke="#fff" stroke-width="0.9"/></svg>
<div class="t c th" style="left:186.30px;top:148.90px;color:#1a1a1a;font-size:8.8px">5 W</div>
<div class="t c th" style="left:271.60px;top:148.60px;font-size:8.6px">2 H</div>
<svg style="left:0;top:0" width="1024" height="517" viewBox="0 0 1024 517"><rect x="27.800" y="136.700" width="34" height="46.500" rx="1.200" fill="#454545"/><rect x="26.600" y="135.600" width="33.400" height="46" rx="1.200" fill="#efefef"/><circle cx="42.700" cy="129.600" r="1.900" fill="none" stroke="#f5a31f" stroke-width="1.900"/><path d="M36.200 130.200h13.100q1.500 0 1.900 1.500l1.300 5.400h-19.500l1.300-5.400q.4-1.500 1.900-1.500z" fill="#f7a823"/><path d="M33.200 135.500h19.100l.2 1.600h-19.500z" fill="#e8921a"/><path d="M33.300 143.700h19" stroke="#9b9b9b" stroke-width="1.500"/><rect x="31.200" y="148.3" width="5.700" height="5.600" rx="0.800" fill="#d8304b"/><path d="M32.500 151.20000000000002l1.200 1.200 2-2.300" fill="none" stroke="#fff" stroke-width="0.900"/><path d="M39.300 151.10000000000002h16" stroke="#9b9b9b" stroke-width="1.200"/><rect x="31.200" y="156.6" width="5.700" height="5.600" rx="0.800" fill="#d8304b"/><path d="M32.500 159.5l1.200 1.200 2-2.300" fill="none" stroke="#fff" stroke-width="0.900"/><path d="M39.300 159.4h16" stroke="#9b9b9b" stroke-width="1.200"/><rect x="31.200" y="164.9" width="5.700" height="5.600" rx="0.800" fill="#d8304b"/><path d="M32.500 167.8l1.200 1.200 2-2.300" fill="none" stroke="#fff" stroke-width="0.900"/><path d="M39.300 167.70000000000002h16" stroke="#9b9b9b" stroke-width="1.200"/><rect x="31.200" y="173.2" width="5.700" height="5.600" rx="0.800" fill="#d8304b"/><path d="M32.500 176.1l1.200 1.200 2-2.300" fill="none" stroke="#fff" stroke-width="0.900"/><path d="M39.300 176.0h16" stroke="#9b9b9b" stroke-width="1.200"/><circle cx="57" cy="159.600" r="13.900" fill="#c9213f"/><circle cx="57" cy="159" r="13.700" fill="#e32b4c"/><g transform="translate(57 159.200)"><path d="M-2.600 -6.500L-1.900 -9.600H1.900L2.600 -6.500Z" fill="#fff" stroke="#fff" stroke-width="0.800" stroke-linejoin="round" transform="rotate(0)"/><path d="M-2.600 -6.500L-1.900 -9.600H1.900L2.600 -6.500Z" fill="#fff" stroke="#fff" stroke-width="0.800" stroke-linejoin="round" transform="rotate(60)"/><path d="M-2.600 -6.500L-1.900 -9.600H1.900L2.600 -6.500Z" fill="#fff" stroke="#fff" stroke-width="0.800" stroke-linejoin="round" transform="rotate(120)"/><path d="M-2.600 -6.500L-1.900 -9.600H1.900L2.600 -6.500Z" fill="#fff" stroke="#fff" stroke-width="0.800" stroke-linejoin="round" transform="rotate(180)"/><path d="M-2.600 -6.500L-1.900 -9.600H1.900L2.600 -6.500Z" fill="#fff" stroke="#fff" stroke-width="0.800" stroke-linejoin="round" transform="rotate(240)"/><path d="M-2.600 -6.500L-1.900 -9.600H1.900L2.600 -6.500Z" fill="#fff" stroke="#fff" stroke-width="0.800" stroke-linejoin="round" transform="rotate(300)"/><circle r="7.500" fill="#fff"/><circle r="4" fill="#e32b4c"/></g></svg>
<div class="abs" style="left:15.50px;top:228.00px;width:84.50px;height:30.60px;background:#7affc7"></div>
<div class="t nav" style="left:20.50px;top:203.50px;">CADASTRO</div>
<div class="t nav" style="left:20.50px;top:243.30px;color:#1d1d1d">PLANOS DE AÇÃO</div>
<div class="t nav" style="left:20.50px;top:275.50px;letter-spacing:0.1px">ACOMPANHAMENTO</div>
<div class="t nav" style="left:20.50px;top:286.10px;">DE EXECUÇÃO</div>
<div class="t nav" style="left:20.50px;top:317.50px;">RELATÓRIOS</div>
<div class="t nav" style="left:20.50px;top:349.10px;">DASHBOARD</div>
<div class="t nav" style="left:20.50px;top:379.10px;">INSTRUÇÕES</div>
<div class="abs" style="left:244.00px;top:111.00px;width:1.00px;height:12.50px;background:#bdbdbd"></div>
<div class="abs" style="left:244.00px;top:123.50px;width:1.00px;height:41.40px;background:#8e8e8e"></div>
<div class="abs" style="left:244.00px;top:164.90px;width:1.00px;height:352.10px;background:#b2b2b2"></div>
<div class="abs" style="left:243.60px;top:178.00px;width:2.00px;height:39.70px;background:#c4c4c4"></div>
<div class="abs" style="left:0.00px;top:217.90px;width:1014.30px;height:1.00px;background:#a8a8a8"></div>
<div class="abs" style="left:1014.30px;top:110.00px;width:9.70px;height:407.00px;background:#f3f3f3"></div>
<svg style="left:0;top:0" width="1024" height="517"><path d="M1018.6 118.800L1021.800 114.800L1025 118.800Z" fill="#5f5f5f"/><path d="M1018.600 510.400L1021.800 514.600L1025 510.400Z" fill="#5f5f5f"/></svg>
<div class="abs" style="left:1019.00px;top:122.80px;width:8.00px;height:10.50px;background:#707070;border-radius:2px"></div>
</div>
</body>
</html>
